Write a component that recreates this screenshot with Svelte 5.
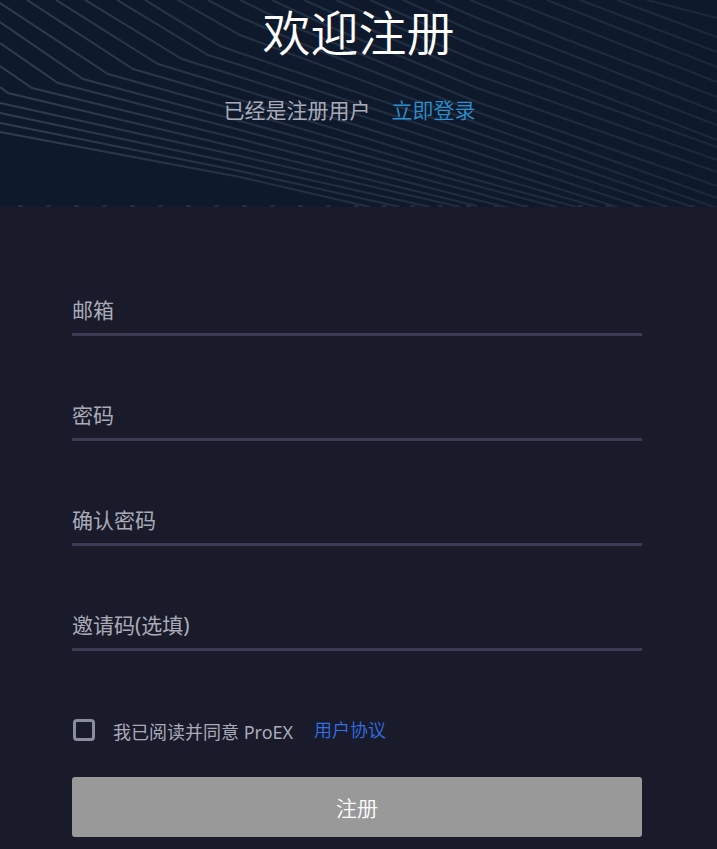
<script lang="ts">
  type Field = { id: string; label: string; type: 'email' | 'password' | 'text' };

  const fields: Field[] = [
    { id: 'email', label: '邮箱', type: 'email' },
    { id: 'password', label: '密码', type: 'password' },
    { id: 'confirm', label: '确认密码', type: 'password' },
    { id: 'invite', label: '邀请码(选填)', type: 'text' },
  ];

  let values = $state<Record<string, string>>({ email: '', password: '', confirm: '', invite: '' });
  let agreed = $state(false);

  // 头部背景的波纹线，自下而上
  const waves = [
    '0,132 240,177 370,207',
    '0,123 240,171 400,207',
    '0,113 240,164 430,207',
    '0,103 240,156 460,207',
    '0,87 8,93 240,148 477,206',
    '0,66 32,88 240,139 477,200 510,208',
    '0,43 58,83 240,130 477,193 530,208',
    '0,22 83,79 240,121 477,186 560,208',
    '0,3 108,74 240,111 477,180 580,208',
    '27,0 133,69 240,100 477,172 600,208',
    '56,0 158,64 240,89 477,163 620,208',
    '85,0 182,59 240,77 477,153 645,208',
    '117,0 208,55 240,65 477,143 670,208',
    '145,0 220,46 240,53 477,133 695,208',
    '178,0 240,35 477,123 717,208',
    '208,0 240,17 300,43 477,112 717,198',
    '240,0 300,29 477,102 717,186',
    '272,0 330,27 477,88 717,172',
    '304,0 360,25 477,75 717,160',
    '336,0 400,28 477,61 717,147',
    '370,0 477,47 717,140',
    '403,0 477,33 717,125',
    '436,0 477,18 717,112',
    '470,0 560,37 717,97',
    '508,0 717,82',
    '547,0 717,67',
    '580,0 717,52',
    '617,0 717,37',
    '647,0 717,18',
  ];

  function submit(event: SubmitEvent) {
    event.preventDefault();
  }
</script>

<main class="page">
  <header class="banner">
    <svg class="waves" viewBox="0 0 717 207" preserveAspectRatio="none" aria-hidden="true">
      <defs>
        <linearGradient id="fade" gradientUnits="userSpaceOnUse" x1="0" y1="0" x2="717" y2="0">
          <stop offset="0" stop-color="#303d4d" />
          <stop offset="0.35" stop-color="#243142" />
          <stop offset="1" stop-color="#1d2939" />
        </linearGradient>
      </defs>
      {#each waves as points}
        <polyline {points} />
      {/each}
      <polyline class="ticks" points="18,206 717,206" />
    </svg>
    <h1>欢迎注册</h1>
    <p class="switch">
      <span>已经是注册用户</span>
      <a href="#login">立即登录</a>
    </p>
  </header>

  <form class="form" onsubmit={submit}>
    {#each fields as field (field.id)}
      <div class="field">
        <input id={field.id} type={field.type} autocomplete="off" bind:value={values[field.id]} />
        <label for={field.id} class:hidden={values[field.id] !== ''}>{field.label}</label>
      </div>
    {/each}

    <div class="agree">
      <input id="agree" type="checkbox" bind:checked={agreed} />
      <label for="agree">我已阅读并同意 ProEX</label>
      <a href="#terms">用户协议</a>
    </div>

    <button class="submit" class:ready={agreed} type="submit">注册</button>
  </form>
</main>

<style>
  :global(body) {
    margin: 0;
    background: #191a2a;
  }

  .page {
    font-family: "Noto Sans", "Noto Sans CJK SC", sans-serif;
    font-size: 21px;
    color: #a9abb8;
    background: #191a2a;
  }

  .banner {
    position: relative;
    padding-bottom: 81px;
    background: #0e1a2b;
    text-align: center;
  }

  /* 波纹铺在标题下层 */
  .waves {
    position: absolute;
    inset: 0;
    width: 100%;
    height: 100%;
  }

  .waves polyline {
    fill: none;
    stroke: url(#fade);
    stroke-width: 2;
  }

  .waves .ticks {
    stroke: #232b3c;
    stroke-dasharray: 5 23;
  }

  h1 {
    position: relative;
    margin: 0;
    font-size: 48px;
    line-height: 66px;
    font-weight: 350;
    color: #fff;
  }

  .switch {
    position: relative;
    display: flex;
    justify-content: center;
    gap: 21px;
    margin: 0;
    padding: 28px 18px 0 0;
    line-height: 32px;
  }

  a {
    text-decoration: none;
    font-weight: 350;
  }

  .switch a {
    color: #2b90d0;
  }

  .form {
    padding: 81px 75px 12px 72px;
  }

  .field {
    display: grid;
    margin-bottom: 57px;
    border-bottom: 3px solid #3b3c54;
  }

  .field input,
  .field label {
    grid-area: 1 / 1;
    line-height: 45px;
  }

  .field input {
    width: 100%;
    height: 45px;
    box-sizing: border-box;
    padding: 0;
    border: 0;
    outline: none;
    background: transparent;
    color: #fff;
    font: inherit;
  }

  .field label {
    pointer-events: none;
  }

  .hidden {
    visibility: hidden;
  }

  .agree {
    display: flex;
    align-items: center;
    padding: 4px 1px 0;
    font-size: 18px;
    line-height: 32px;
  }

  .agree input {
    appearance: none;
    width: 22px;
    height: 22px;
    box-sizing: border-box;
    margin: 0 18px 0 0;
    border: 3px solid #8a8d9f;
    border-radius: 4px;
  }

  .agree input:checked {
    background: #3a6fe0;
  }

  .agree label {
    padding-top: 4px;
  }

  .agree a {
    margin-left: 21px;
    color: #3370e8;
  }

  .submit {
    display: block;
    width: 100%;
    height: 60px;
    margin-top: 29px;
    border: 0;
    border-radius: 3px;
    background: #999;
    color: #fff;
    font: inherit;
    font-weight: 350;
    cursor: pointer;
  }

  .submit.ready {
    background: #3370e8;
  }
</style>
